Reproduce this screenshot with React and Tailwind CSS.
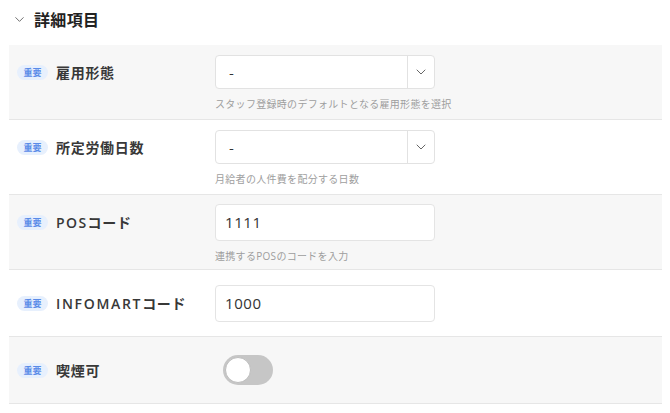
import { ChevronDown } from "lucide-react";

const font = { fontFamily: '"Noto Sans CJK JP", "Noto Sans", sans-serif' };
const mixed = { fontFamily: '"Open Sans", "Noto Sans CJK JP", sans-serif' };

const Badge = () => (
  <span
    className="inline-flex items-center justify-center h-[15px] w-[31px] rounded-full bg-[#e7f0fd] text-[#5a8be8] text-[9px] font-semibold leading-none"
    style={font}
  >
    重要
  </span>
);

const Label = ({ children }) => (
  <div className="w-[206px] shrink-0 flex items-center gap-2 pl-2">
    <Badge />
    <span className="text-[14px] font-semibold text-[#383838] tracking-[0.05em]" style={mixed}>
      {children}
    </span>
  </div>
);

const Helper = ({ children }) => (
  <p className="ml-[206px] mt-[9px] text-[10px] leading-[12px] text-[#9e9e9e] tracking-[0.03em]" style={mixed}>
    {children}
  </p>
);

const SelectBox = () => (
  <div className="flex w-[220px] h-[34px] bg-white border border-[#e2e2e2] rounded-[4px]">
    <div className="flex-1 flex items-center pl-[13px] text-[14px] text-[#333]">-</div>
    <div className="w-[27px] flex items-center justify-center border-l border-[#e2e2e2]">
      <ChevronDown size={16} strokeWidth={1.5} className="text-[#666]" />
    </div>
  </div>
);

const InputBox = ({ value }) => (
  <div
    className="flex items-center w-[220px] h-[37px] bg-white border border-[#e4e4e4] rounded-[4px] pl-[9px] text-[15px] text-[#333] tracking-[0.04em]"
    style={mixed}
  >
    {value}
  </div>
);

export default function App() {
  return (
    <div className="w-[670px] h-[413px] bg-white overflow-hidden" style={font}>
      {/* ================= HEADER ================= */}
      <div className="h-[45px] flex items-start pt-[8px] pl-[12px] gap-[7px]">
        <ChevronDown size={15} strokeWidth={1.5} className="text-[#666] mt-[4px]" />
        <h2 className="text-[16px] font-bold text-[#222] tracking-[0.02em] leading-[22px]">
          詳細項目
        </h2>
      </div>

      {/* ================= ROWS ================= */}
      <div className="ml-[9px] w-[653px]">
        <div className="bg-[#f7f7f7] border-b border-[#e6e6e6] pt-[10px] h-[75px]">
          <div className="flex items-center">
            <Label>雇用形態</Label>
            <SelectBox />
          </div>
          <Helper>スタッフ登録時のデフォルトとなる雇用形態を選択</Helper>
        </div>

        <div className="bg-white border-b border-[#e6e6e6] pt-[10px] h-[75px]">
          <div className="flex items-center">
            <Label>所定労働日数</Label>
            <SelectBox />
          </div>
          <Helper>月給者の人件費を配分する日数</Helper>
        </div>

        <div className="bg-[#f7f7f7] border-b border-[#e6e6e6] pt-[9px] h-[75px]">
          <div className="flex items-center">
            <Label>
              <span className="tracking-[0.1em]">POS</span>コード
            </Label>
            <InputBox value="1111" />
          </div>
          <Helper>連携するPOSのコードを入力</Helper>
        </div>

        <div className="bg-white border-b border-[#e6e6e6] h-[67px] flex items-center">
          <Label>
            <span className="tracking-[0.12em]">INFOMART</span>コード
          </Label>
          <InputBox value="1000" />
        </div>

        <div className="bg-[#f7f7f7] border-b border-[#e6e6e6] h-[67px] flex items-center">
          <Label>喫煙可</Label>
          <div className="ml-[8px] w-[50px] h-[30px] rounded-full bg-[#c6c6c6] flex items-center pl-[2px]">
            <div className="w-[26px] h-[26px] rounded-full bg-white border border-[#bdbdbd]" />
          </div>
        </div>
      </div>
    </div>
  );
}
